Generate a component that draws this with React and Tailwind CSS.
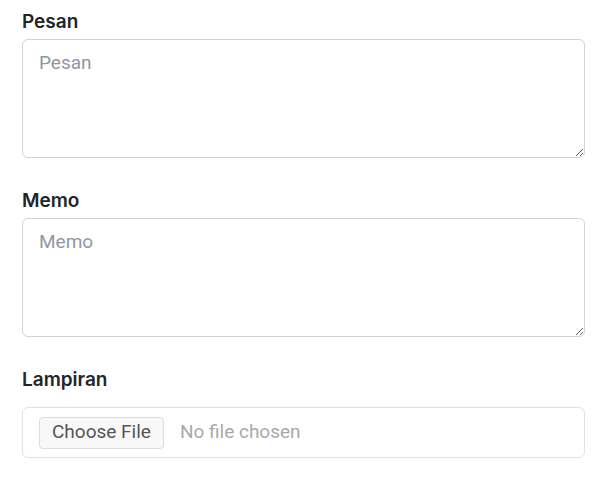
export default function App() {
  const label = "block text-[19px] font-semibold text-[#212529] leading-[26px]";
  const lf = { fontFamily: "Inter, Roboto, sans-serif" };
  const ta =
    "block w-full h-[119px] rounded-[6px] border border-[#ced4da] bg-white px-[16px] py-[10px] text-[19px] leading-[26px] text-[#212529] placeholder:text-[#8d97a3] outline-none";
  return (
    <div className="w-[601px] h-[488px] bg-white pl-[22px] pr-[16px] pt-[9px]" style={{ fontFamily: "Roboto, 'Noto Sans', sans-serif" }}>
      <div className="mb-[30px]">
        <label className={label + " mb-[4px]"} style={lf}>Pesan</label>
        <textarea className={ta} placeholder="Pesan" />
      </div>
      <div className="mb-[30px]">
        <label className={label + " mb-[4px]"} style={lf}>Memo</label>
        <textarea className={ta} placeholder="Memo" />
      </div>
      <div>
        <label className={label + " mb-[14px]"} style={lf}>Lampiran</label>
        <div className="flex h-[51px] w-full items-center rounded-[6px] border border-[#dee2e6] bg-white px-[16px]">
          <span className="flex h-[32px] items-center rounded-[4px] border border-[#dcdcdc] bg-[#f8f8f8] px-[12px] text-[19px] text-[#555]">Choose File</span>
          <span className="ml-[16px] text-[19px] text-[#a9a9a9]">No file chosen</span>
        </div>
      </div>
    </div>
  );
}
